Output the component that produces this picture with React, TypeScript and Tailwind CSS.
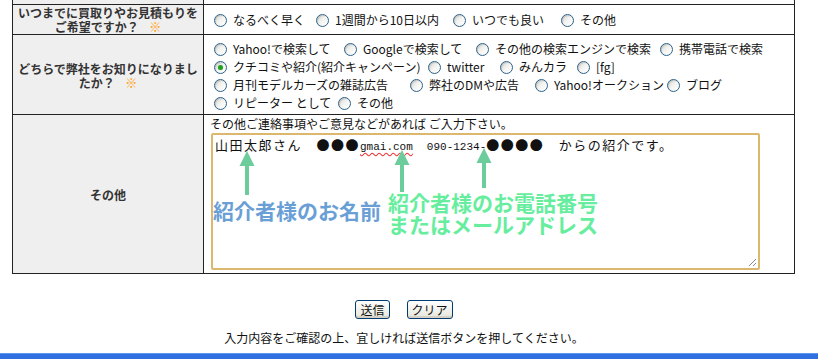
import React from 'react';

const jp = { fontFamily: '"Noto Sans CJK JP", "Noto Sans", sans-serif' };

const Radio = ({ checked = false }: { checked?: boolean }) => (
    <span className="inline-flex w-[13px] h-[13px] shrink-0 rounded-full border border-[#2c628b] bg-gradient-to-br from-[#d6d6d0] via-[#f4f4f2] to-white items-center justify-center shadow-[inset_1px_1px_1px_rgba(0,0,0,0.12)]">
        {checked && <span className="block w-[5px] h-[5px] rounded-full bg-[#21a121] shadow-[0_0_1px_#8fd88f]" />}
    </span>
);

const Option = ({ label, checked, w }: { label: string; checked?: boolean; w: number }) => (
    <label className="inline-flex items-center gap-[6px] shrink-0" style={{ width: w }}>
        <Radio checked={checked} />
        <span className="whitespace-nowrap">{label}</span>
    </label>
);

const Arrow = ({ x, top, len }: { x: number; top: number; len: number }) => (
    <svg className="absolute" style={{ left: x - 8, top }} width="16" height={len} viewBox={`0 0 16 ${len}`}>
        <polygon points={`8,0 15.5,15 0.5,15`} fill="#6ccc9c" />
        <rect x="6" y="14" width="4" height={len - 14} fill="#6ccc9c" />
    </svg>
);

const mono = { fontFamily: '"Liberation Mono", monospace', fontSize: 11 };

export default function App() {
    return (
        <div className="relative w-[818px] h-[359px] bg-white overflow-hidden text-[#111]" style={jp}>
            <div className="ml-[12px] w-[783px] border-l border-r border-[#222]">
                {/* tail of the row above */}
                <div className="flex h-[5px] border-b border-[#222]">
                    <div className="w-[191px] bg-[#efefef] border-r border-[#222]" />
                    <div className="flex-1" />
                </div>

                {/* row 1 */}
                <div className="flex h-[30px] border-b border-[#222]">
                    <div className="w-[191px] bg-[#efefef] border-r border-[#222] flex flex-col items-center justify-center text-[12px] leading-[14px] font-bold text-[#333] whitespace-nowrap">
                        <span>いつまでに買取りやお見積もりを</span>
                        <span>ご希望ですか？ <span className="text-[#ff9900] ml-[8px]">※</span></span>
                    </div>
                    <div className="flex-1 flex items-center pl-[10px] text-[12px] pt-[1px]">
                        <Option label="なるべく早く" w={102} />
                        <Option label="1週間から10日以内" w={137} />
                        <Option label="いつでも良い" w={108} />
                        <Option label="その他" w={80} />
                    </div>
                </div>

                {/* row 2 */}
                <div className="flex h-[80px] border-b border-[#222]">
                    <div className="w-[191px] bg-[#efefef] border-r border-[#222] flex flex-col items-center justify-center text-[12px] leading-[14px] font-bold text-[#333] pt-[2px] whitespace-nowrap">
                        <span>どちらで弊社をお知りになりまし</span>
                        <span>たか？ <span className="text-[#ff9900] ml-[8px]">※</span></span>
                    </div>
                    <div className="flex-1 flex flex-col pl-[10px] pt-[5px] text-[12px] leading-[18px]">
                        <div className="flex items-center h-[18px]">
                            <Option label="Yahoo!で検索して" w={130} />
                            <Option label="Googleで検索して" w={132} />
                            <Option label="その他の検索エンジンで検索" w={184} />
                            <Option label="携帯電話で検索" w={110} />
                        </div>
                        <div className="flex items-center h-[18px]">
                            <Option label="クチコミや紹介(紹介キャンペーン)" checked w={214} />
                            <Option label="twitter" w={72} />
                            <Option label="みんカラ" w={77} />
                            <Option label="[fg]" w={50} />
                        </div>
                        <div className="flex items-center h-[18px]">
                            <Option label="月刊モデルカーズの雑誌広告" w={196} />
                            <Option label="弊社のDMや広告" w={125} />
                            <Option label="Yahoo!オークション" w={132} />
                            <Option label="ブログ" w={60} />
                        </div>
                        <div className="flex items-center h-[18px]">
                            <Option label="リピーター として" w={124} />
                            <Option label="その他" w={60} />
                        </div>
                    </div>
                </div>

                {/* row 3 */}
                <div className="flex h-[159px] border-b border-[#222]">
                    <div className="w-[191px] bg-[#efefef] border-r border-[#222] flex items-center justify-center text-[12px] font-bold text-[#333] pt-[2px]">
                        その他
                    </div>
                    <div className="flex-1 pl-[6px] pt-[1px] text-[12px]">
                        <div className="leading-[16px]">その他ご連絡事項やご意見などがあれば ご入力下さい。</div>
                        <div className="relative mt-[1px] ml-[1px] w-[549px] h-[137px] border-2 border-[#dcb86e] rounded-[2px] bg-white">
                            <div className="pl-[2px] pt-[2px] text-[13px] leading-[16px] whitespace-pre tracking-[1.5px]">
                                山田太郎さん　●●●<span className="underline decoration-wavy decoration-[#e33] underline-offset-2 tracking-normal" style={mono}>gmai.com</span>
                                <span className="tracking-normal pl-[14px]" style={mono}>090-1234-</span>●●●●　からの紹介です。
                            </div>
                            <svg className="absolute right-[1px] bottom-[1px]" width="10" height="10" viewBox="0 0 10 10">
                                <line x1="9" y1="2" x2="2" y2="9" stroke="#888" />
                                <line x1="9" y1="6" x2="6" y2="9" stroke="#888" />
                            </svg>
                        </div>
                    </div>
                </div>
            </div>

            {/* annotations over the textarea */}
            <Arrow x={247} top={151} len={44} />
            <Arrow x={402} top={150} len={42} />
            <Arrow x={484} top={148} len={40} />
            <div className="absolute left-[213px] top-[199px] text-[21px] leading-[22px] font-bold text-[#6a9fd6] whitespace-nowrap">紹介者様のお名前</div>
            <div className="absolute left-[388px] top-[191px] text-[21px] leading-[22px] font-bold text-[#66ee9e] whitespace-nowrap">
                <div>紹介者様のお電話番号</div>
                <div>またはメールアドレス</div>
            </div>

            {/* buttons */}
            <div className="flex justify-center gap-[17px] mt-[26px] pr-[10px]">
                <button className="h-[19px] px-[4px] text-[12px] leading-[15px] rounded-[3px] border border-[#003c74] bg-gradient-to-b from-white to-[#e6e6dc] shadow-[inset_0_-2px_0_#d6d0c5]">送信</button>
                <button className="h-[19px] px-[4px] text-[12px] leading-[15px] rounded-[3px] border border-[#003c74] bg-gradient-to-b from-white to-[#e6e6dc] shadow-[inset_0_-2px_0_#d6d0c5]">クリア</button>
            </div>
            <div className="text-center text-[12px] mt-[10px] pr-[10px]">入力内容をご確認の上、宜しければ送信ボタンを押してください。</div>

            {/* taskbar edge */}
            <div className="absolute left-0 right-0 bottom-0 h-[6px] bg-[#2f6fdf] border-t border-[#5d97ee]" />
        </div>
    );
}
